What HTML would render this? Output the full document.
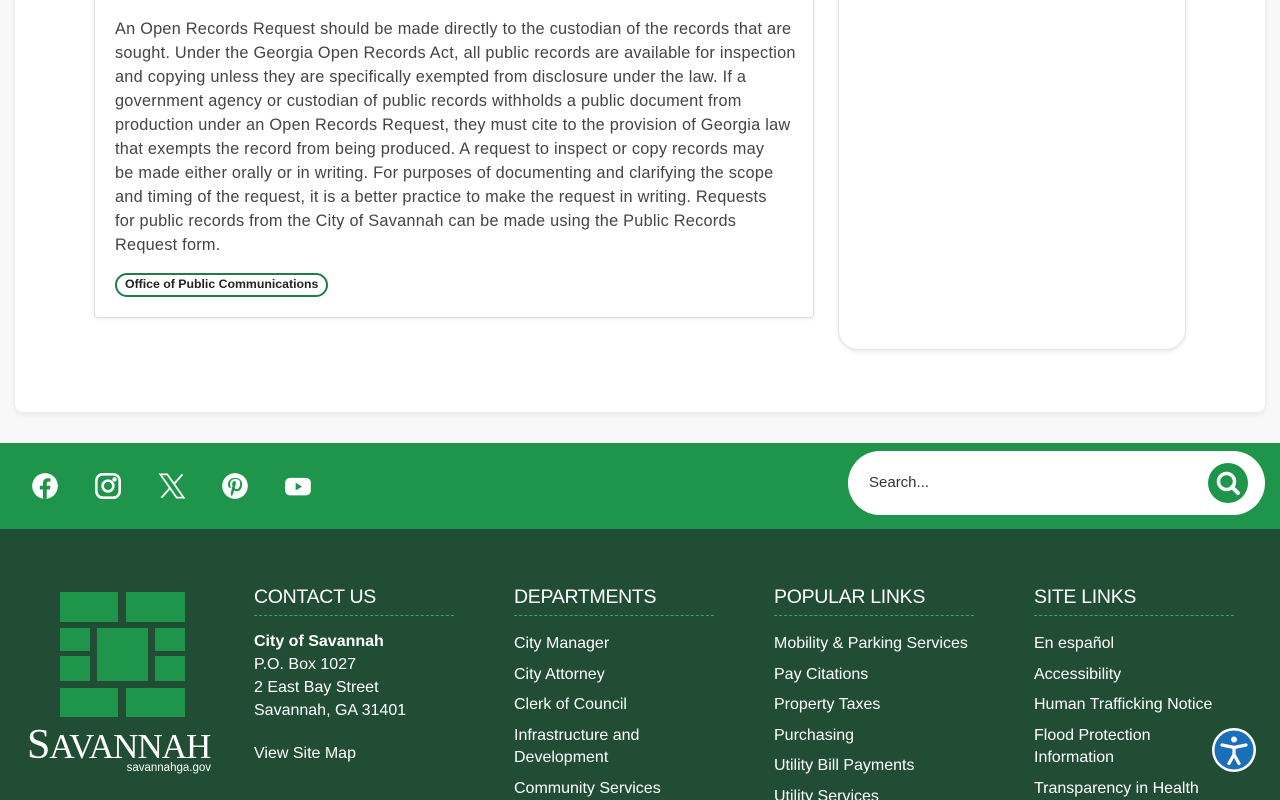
<!DOCTYPE html>
<html style="overflow:hidden;height:800px"><head><meta charset="utf-8"><style>
*{box-sizing:border-box;margin:0;padding:0}
body{width:1280px;height:800px;overflow:hidden;background:#f8f8f8;font-family:"Liberation Sans",sans-serif;position:relative}
.outer{position:absolute;left:15px;top:-20px;width:1250px;height:432px;background:#fff;border-radius:8px;box-shadow:0 2px 6px rgba(0,0,0,.08)}
.card{position:absolute;left:94px;top:-10px;width:720px;height:328px;border:1px solid #ddd;border-radius:4px;background:#fff;box-shadow:0 1px 3px rgba(0,0,0,.08)}
.card p{position:absolute;left:20px;top:26px;width:690px;font-size:16.3px;letter-spacing:.25px;line-height:24px;color:#444;white-space:nowrap}
.tag{position:absolute;left:20px;top:282px;height:24px;padding:0 8px;border:2.5px solid #1e7e47;border-radius:12px;font-size:12.3px;font-weight:bold;line-height:19px;color:#222}
.side{position:absolute;left:838px;top:-20px;width:348px;height:370px;border:1px solid #e4e4e4;border-radius:20px;background:#fff;box-shadow:0 2px 4px rgba(0,0,0,.08)}
.green{position:absolute;left:0;top:443px;width:1280px;height:86px;background:#1e954a}
.soc{position:absolute;top:29px}
.search{position:absolute;left:848px;top:8px;width:417px;height:64px;background:#fff;border-radius:32px}
.search span{position:absolute;left:21px;top:23px;font-size:15px;color:#333}
.foot{position:absolute;left:0;top:529px;width:1280px;height:271px;background:#214d35;overflow:hidden}
.sq{position:absolute;background:#1e954a}
.col{position:absolute;top:56px;width:200px;color:#fff}
.col h3{font-size:19.5px;font-weight:normal;height:31px;padding-top:1px;border-bottom:1px dashed #3aa55f;margin-bottom:17px;letter-spacing:-.3px}
.col a{display:block;font-size:16px;line-height:22.5px;margin-bottom:8px;color:#fff;white-space:nowrap}
.col div{font-size:16px;line-height:23px;margin-top:-3px}
</style></head><body>
<div class="outer"></div>
<div class="card"><p>An Open Records Request should be made directly to the custodian of the records that are<br>sought. Under the Georgia Open Records Act, all public records are available for inspection<br>and copying unless they are specifically exempted from disclosure under the law. If a<br>government agency or custodian of public records withholds a public document from<br>production under an Open Records Request, they must cite to the provision of Georgia law<br>that exempts the record from being produced. A request to inspect or copy records may<br>be made either orally or in writing. For purposes of documenting and clarifying the scope<br>and timing of the request, it is a better practice to make the request in writing. Requests<br>for public records from the City of Savannah can be made using the Public Records<br>Request form.</p><div class="tag">Office of Public Communications</div></div>
<div class="side"></div>
<div class="green">
<svg class="soc" style="left:31px" width="28" height="28" viewBox="0 0 24 24"><circle cx="12" cy="12" r="11" fill="#fff"/><path d="M13.5 23v-8h2.7l.4-3.2h-3.1V9.8c0-.9.3-1.5 1.6-1.5h1.6V5.5c-.3 0-1.3-.1-2.4-.1-2.4 0-4 1.4-4 4.1v2.3H7.6V15h2.7v8z" fill="#1e954a"/></svg>
<svg class="soc" style="left:94px" width="28" height="28" viewBox="0 0 24 24" fill="none" stroke="#fff" stroke-width="2.2"><rect x="2" y="2" width="20" height="20" rx="5.5"/><circle cx="12" cy="12" r="4.6"/><circle cx="17.6" cy="6.4" r=".8" fill="#fff"/></svg>
<svg class="soc" style="left:158px" width="28" height="28" viewBox="0 0 24 24"><path d="M2 2h6l14 20h-6z" fill="none" stroke="#fff" stroke-width="1.5"/><path d="M21 2 13.5 10.5M3 22l7.5-8.5" stroke="#fff" stroke-width="1.6"/></svg>
<svg class="soc" style="left:221px" width="28" height="28" viewBox="0 0 24 24"><circle cx="12" cy="12" r="11" fill="#fff"/><path d="M12.3 5c-4.5 0-6.3 3-6.3 5.5 0 1.5.6 2.8 1.800 3.300.2.1.4 0 .4-.2l.2-.7c0-.2 0-.3-.1-.5-.4-.5-.6-1-.6-1.900 0-2.400 1.800-4.600 4.700-4.600 2.600 0 4 1.600 4 3.700 0 2.800-1.200 5.100-3 5.100-1 0-1.800-.8-1.500-1.900.3-1.200.9-2.600.9-3.500 0-.8-.4-1.500-1.300-1.500-1 0-1.900 1.100-1.900 2.500 0 .9.3 1.500.3 1.500l-1.300 5.300c-.2.9-.2 2 0 3l.8.4c.6-1 1.200-2.300 1.400-3.100l.5-2c.3.6 1.200 1.100 2.100 1.100 2.800 0 4.700-2.600 4.700-6C18.100 7.500 15.800 5 12.300 5z" fill="#1e954a"/></svg>
<svg class="soc" style="left:284px" width="28" height="28" viewBox="0 0 24 24"><rect x="1" y="5" width="22" height="15" rx="4" fill="#fff"/><path d="M10 9.2v6.6l5.5-3.300z" fill="#1e954a"/></svg>
<div class="search"><span>Search...</span>
<svg style="position:absolute;left:360px;top:12px" width="40" height="40" viewBox="0 0 40 40"><circle cx="20" cy="20" r="20" fill="#1e954a"/><circle cx="18.500" cy="18.500" r="8" fill="none" stroke="#fff" stroke-width="3.500"/><path d="M24 24l6 6" stroke="#fff" stroke-width="4" stroke-linecap="round"/></svg></div>
</div>
<div class="foot">
<div class="sq" style="left:60px;top:63px;width:58px;height:30px"></div>
<div class="sq" style="left:126px;top:63px;width:59px;height:30px"></div>
<div class="sq" style="left:60px;top:99px;width:30px;height:23px"></div>
<div class="sq" style="left:97px;top:99px;width:51px;height:53px"></div>
<div class="sq" style="left:155px;top:99px;width:30px;height:23px"></div>
<div class="sq" style="left:60px;top:127px;width:30px;height:25px"></div>
<div class="sq" style="left:155px;top:127px;width:30px;height:25px"></div>
<div class="sq" style="left:60px;top:159px;width:58px;height:29px"></div>
<div class="sq" style="left:126px;top:159px;width:59px;height:29px"></div>
<div style="position:absolute;left:27px;top:196px;font-family:'Liberation Serif',serif;font-size:42px;color:#fff;letter-spacing:-1px;line-height:40px">S<span style="font-size:35px">AVANNAH</span></div>
<div style="position:absolute;left:100px;top:233px;width:111px;text-align:right;font-size:11.5px;color:#fff">savannahga.gov</div>
<div class="col" style="left:254px"><h3>CONTACT US</h3><div><b>City of Savannah</b><br>P.O. Box 1027<br>2 East Bay Street<br>Savannah, GA 31401</div><a style="margin-top:21px">View Site Map</a></div>
<div class="col" style="left:514px"><h3>DEPARTMENTS</h3><a>City Manager</a><a>City Attorney</a><a>Clerk of Council</a><a>Infrastructure and<br>Development</a><a>Community Services</a></div>
<div class="col" style="left:774px"><h3>POPULAR LINKS</h3><a>Mobility &amp; Parking Services</a><a>Pay Citations</a><a>Property Taxes</a><a>Purchasing</a><a>Utility Bill Payments</a><a>Utility Services</a></div>
<div class="col" style="left:1034px"><h3>SITE LINKS</h3><a>En español</a><a>Accessibility</a><a>Human Trafficking Notice</a><a>Flood Protection<br>Information</a><a>Transparency in Health</a></div>
<svg style="position:absolute;left:1211px;top:198px" width="46" height="46" viewBox="0 0 46 46"><circle cx="23" cy="23" r="22" fill="#fff"/><circle cx="23" cy="23" r="19.500" fill="#1b6fb8"/><circle cx="23" cy="12.500" r="3" fill="#fff"/><path d="M11 18l12 2.500 12-2.500M23 20.500v7l-5 9M23 27.500l5 9" stroke="#fff" stroke-width="3.200" fill="none" stroke-linecap="round" stroke-linejoin="round"/></svg>
</div>
</body></html>
